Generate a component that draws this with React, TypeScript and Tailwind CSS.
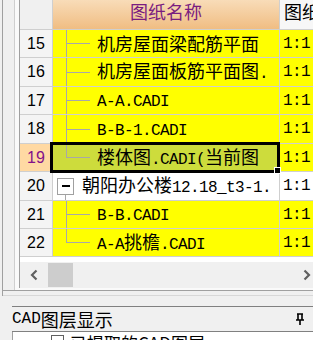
import React from 'react'

const CJK = /[\u3000-\u9fff\uff00-\uffef]/

function Mixed({ text }: { text: string }) {
  const parts: { t: string; cjk: boolean }[] = []
  for (const ch of text) {
    const cjk = CJK.test(ch)
    const last = parts[parts.length - 1]
    if (last && last.cjk === cjk) last.t += ch
    else parts.push({ t: ch, cjk })
  }
  return (
    <span className="leading-[22px]">
      {parts.map((p, i) =>
        p.cjk ? (
          <span key={i} className="text-[18px]">{p.t}</span>
        ) : (
          <span key={i} className="font-['Liberation_Mono',monospace] text-[16px] tracking-[-0.6px]">{p.t}</span>
        )
      )}
    </span>
  )
}

type Row = { n: number; text: string; kind: 'child' | 'last' | 'parent'; h: string; selected?: boolean }

const rows: Row[] = [
  { n: 15, text: '机房屋面梁配筋平面', kind: 'child', h: 'h-[28px]' },
  { n: 16, text: '机房屋面板筋平面图.', kind: 'child', h: 'h-[29px]' },
  { n: 17, text: 'A-A.CADI', kind: 'child', h: 'h-[28px]' },
  { n: 18, text: 'B-B-1.CADI', kind: 'child', h: 'h-[29px]' },
  { n: 19, text: '楼体图.CADI(当前图', kind: 'last', h: 'h-[28px]', selected: true },
  { n: 20, text: '朝阳办公楼12.18_t3-1.', kind: 'parent', h: 'h-[29px]' },
  { n: 21, text: 'B-B.CADI', kind: 'child', h: 'h-[28px]' },
  { n: 22, text: 'A-A挑檐.CADI', kind: 'last', h: 'h-[28px]' },
]

function Connector({ last }: { last: boolean }) {
  return (
    <div className="flex flex-col w-[24px] shrink-0">
      <div className="flex-1 border-l border-b border-[#a8a8a8]" />
      <div className={'flex-1 ' + (last ? '' : 'border-l border-[#a8a8a8]')} />
    </div>
  )
}

function GridRow({ row }: { row: Row }) {
  const nameBg = row.selected ? 'bg-[#cddc3c]' : row.kind === 'parent' ? 'bg-white' : 'bg-[#ffff00]'
  return (
    <div className={'flex border-b border-[#cfcfcf] ' + row.h}>
      <div
        className={
          'w-[33px] shrink-0 border-r border-[#cfcfcf] flex items-center justify-center font-["Liberation_Sans",sans-serif] text-[16px] ' +
          (row.selected ? 'bg-[#ffd9a3] text-[#84108a]' : 'bg-[#f4f4f4] text-black')
        }
      >
        {row.n}
      </div>
      <div className={'relative w-[227px] shrink-0 border-r border-[#cfcfcf] flex items-stretch whitespace-nowrap ' + nameBg}>
        {row.kind === 'parent' ? (
          <>
            <div className="w-[4px] shrink-0" />
            <div className="flex flex-col w-[17px] shrink-0">
              <div className="flex-1" />
              <div className="h-[17px] border border-[#a0a0a0] bg-white flex items-center justify-center">
                <div className="w-[8px] h-[2px] bg-black" />
              </div>
              <div className="flex-1 ml-[8px] border-l border-[#a8a8a8]" />
            </div>
            <div className="flex items-center ml-[8px] text-black">
              <Mixed text={row.text} />
            </div>
          </>
        ) : (
          <>
            <div className="w-[13px] shrink-0" />
            <Connector last={row.kind === 'last'} />
            <div className="flex items-center ml-[7px] text-black">
              <Mixed text={row.text} />
            </div>
          </>
        )}
        {row.selected && (
          <div className="absolute left-[-3px] top-[-2px] right-[-1px] bottom-[-2px] border-[3px] border-black z-10 pointer-events-none">
            <div className="absolute right-[-4px] bottom-[-4px] w-[7px] h-[7px] bg-black border border-white" />
          </div>
        )}
      </div>
      <div className={'flex-1 flex items-center pl-[3px] overflow-hidden whitespace-nowrap font-["Liberation_Mono",monospace] text-[16px] tracking-[-0.6px] ' + (row.kind === 'parent' ? 'bg-white' : 'bg-[#ffff00]')}>
        1:1
      </div>
    </div>
  )
}

export default function App() {
  return (
    <div className="w-[313px] h-[340px] overflow-hidden bg-[#f0f0f0] font-['Noto_Sans_CJK_SC',sans-serif] flex flex-col">
      {/* upper panel */}
      <div className="flex h-[296px] shrink-0">
        <div className="w-[2px] shrink-0" />
        <div className="w-[1px] shrink-0 bg-[#a0a0a0]" />
        <div className="flex-1 flex flex-col">
          <div className="flex h-[291px] shrink-0 border-b border-[#a0a0a0]">
            <div className="w-[12px] shrink-0 border-r border-[#cfcfcf]" />
            <div className="flex-1 flex flex-col bg-[#fafafa] pl-[4px] pb-[2px]">
              <div className="flex-1 flex border-l border-[#a0a0a0] bg-[#f0f0f0]">
                <div className="flex-1 flex flex-col">
                  {/* header */}
                  <div className="flex h-[30px] border-b border-[#cfcfcf] shrink-0">
                    <div className="w-[33px] shrink-0 bg-[#f0f0f0] border-r border-[#cfcfcf]" />
                    <div className="w-[227px] shrink-0 border-r border-[#cfcfcf] bg-gradient-to-b from-[#f8dcb8] to-[#f0bd82] flex justify-center pt-[1px] text-[18px] leading-[20px] text-[#7a1c80]">
                      图纸名称
                    </div>
                    <div className="flex-1 bg-[#f7f7f7] pl-[4px] pt-[1px] text-[18px] leading-[20px] whitespace-nowrap overflow-hidden text-black">
                      图纸
                    </div>
                  </div>
                  {rows.map((r) => (
                    <GridRow key={r.n} row={r} />
                  ))}
                  <div className="h-[5px] bg-white" />
                  {/* horizontal scrollbar */}
                  <div className="h-[26px] flex items-stretch bg-[#f0f0f0]">
                    <div className="w-[28px] flex items-center justify-center">
                      <svg width="8" height="12" viewBox="0 0 8 12">
                        <path d="M6.5 1.5 L2 6 L6.5 10.5" fill="none" stroke="#606060" strokeWidth="2.2" />
                      </svg>
                    </div>
                    <div className="w-[25px] my-[1px] bg-[#cdcdcd]" />
                    <div className="flex-1" />
                    <div className="w-[26px] flex items-center justify-center">
                      <svg width="8" height="12" viewBox="0 0 8 12">
                        <path d="M1.5 1.5 L6 6 L1.5 10.5" fill="none" stroke="#606060" strokeWidth="2.2" />
                      </svg>
                    </div>
                  </div>
                </div>
                {/* vertical scrollbar */}
                <div className="w-[9px] shrink-0 flex flex-col bg-[#f0f0f0]">
                  <div className="h-[170px] shrink-0" />
                  <div className="h-[65px] shrink-0 bg-[#d6d6d6]" />
                  <div className="flex-1" />
                </div>
              </div>
            </div>
          </div>
          <div className="flex-1 border-b border-[#d8d8d8]" />
        </div>
      </div>
      {/* lower panel */}
      <div className="flex-1 flex flex-col pl-[12px] pt-[10px]">
        <div className="h-[26px] shrink-0 border-t border-b border-[#808080] flex items-center justify-between pr-[8px]">
          <div className="flex items-center text-black leading-none">
            <span className="font-['Liberation_Mono',monospace] text-[16px]">CAD</span>
            <span className="text-[18px]">图层显示</span>
          </div>
          <svg width="10" height="13" viewBox="0 0 10 13">
            <path d="M2 1 H8 M3 1 V7 M7 1 V7 M1 7 H9 M5 7 V12" fill="none" stroke="#000" strokeWidth="1.6" />
          </svg>
        </div>
        <div className="flex-1 bg-white border-l border-[#a0a0a0] flex items-start pl-[38px] pt-[2px]">
          <div className="w-[13px] h-[13px] border border-[#606060] mt-[1px]" />
          <span className="ml-[6px] text-[17px] leading-[17px]">已提取的CAD图层</span>
        </div>
      </div>
    </div>
  )
}
